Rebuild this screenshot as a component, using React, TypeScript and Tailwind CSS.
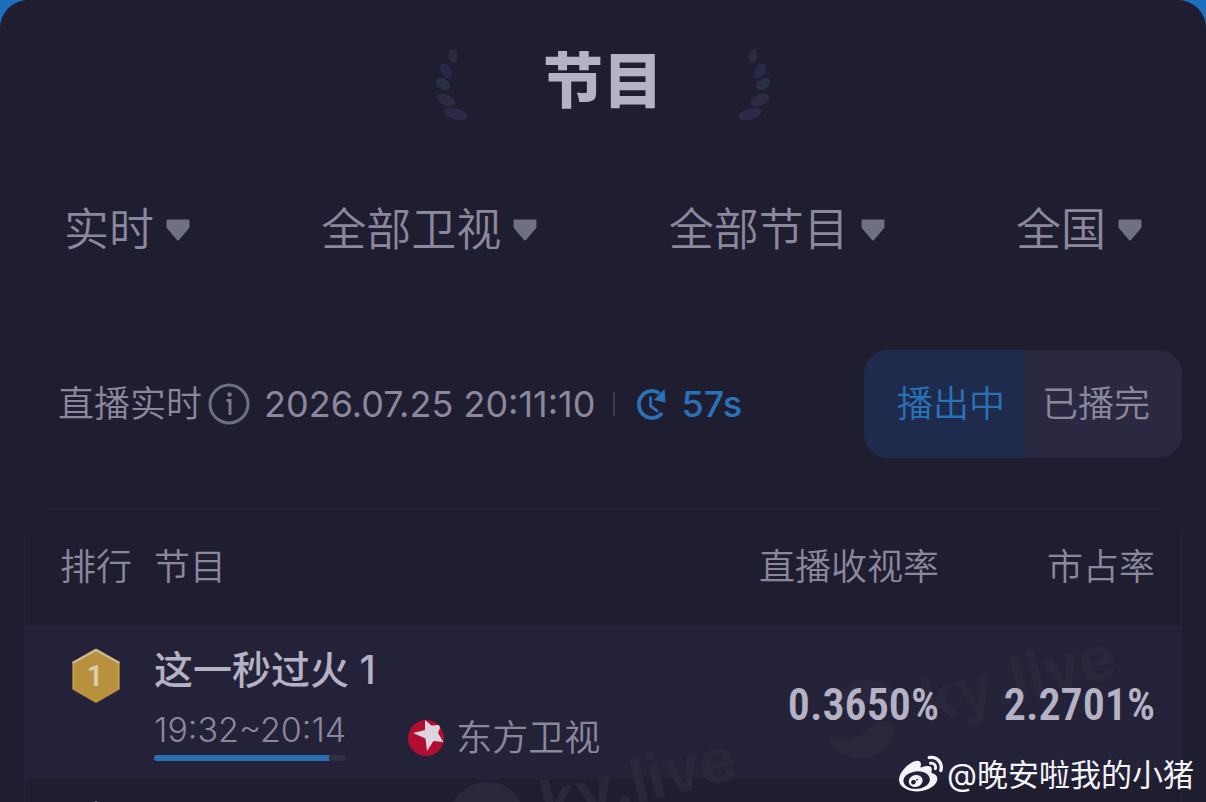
import { useState } from "react";
import { FaWeibo } from "react-icons/fa";

const FILTERS = [
  { id: "time", label: "实时" },
  { id: "channel", label: "全部卫视" },
  { id: "program", label: "全部节目" },
  { id: "region", label: "全国" },
];

const ROWS = [
  {
    rank: 1,
    title: "这一秒过火 1",
    time: "19:32~20:14",
    progress: 91,
    channel: "东方卫视",
    rating: "0.3650%",
    share: "2.2701%",
  },
];

function Laurel({ flip = false }: { flip?: boolean }) {
  return (
    <svg width="36" height="72" viewBox="0 0 36 72" className={flip ? "-scale-x-100" : ""} aria-hidden="true">
      <ellipse cx="18" cy="8" rx="4.500" ry="7" fill="#2b2a42" transform="rotate(-8 18 8)" />
      <ellipse cx="11" cy="23" rx="5" ry="8" fill="#2a2849" transform="rotate(-32 11 23)" />
      <ellipse cx="8" cy="36" rx="5" ry="8" fill="#293046" transform="rotate(-56 8 36)" />
      <ellipse cx="11" cy="52" rx="5.500" ry="10" fill="#2d2b42" transform="rotate(-66 11 52)" />
      <ellipse cx="21" cy="66" rx="5.500" ry="12" fill="#2c2a48" transform="rotate(-76 21 66)" />
    </svg>
  );
}

function FilterArrow() {
  return (
    <svg width="24" height="22" viewBox="0 0 24 22" aria-hidden="true">
      <path d="M1.500 0.500h21a1 1 0 0 1 1 1v6a3 3 0 0 1-.7 1.900L13 21a1.400 1.400 0 0 1-2 0L1.200 9.400A3 3 0 0 1 .5 7.500v-6a1 1 0 0 1 1-1z" fill="#6f7080" />
    </svg>
  );
}

function InfoIcon() {
  return (
    <svg width="42" height="42" viewBox="0 0 42 42" fill="none" aria-hidden="true">
      <circle cx="21" cy="21" r="19" stroke="#6c7284" strokeWidth="3" />
      <circle cx="21.500" cy="11.500" r="2.300" fill="#77788a" />
      <path d="M18.500 17.500H22V32" stroke="#77788a" strokeWidth="3" />
    </svg>
  );
}

function RefreshClock() {
  return (
    <svg width="32" height="34" viewBox="0 0 32 34" fill="none" aria-hidden="true">
      <path d="M24.500 6.500A13 13.500 0 1 0 27 26" stroke="#2a72b8" strokeWidth="3.800" />
      <path d="M29.500 2l1 13.500L19 13z" fill="#2a72b8" />
      <path d="M15.500 9.500V19l7.500 5.500" stroke="#2a72b8" strokeWidth="2.800" />
    </svg>
  );
}

function RankBadge({ rank }: { rank: number }) {
  return (
    <svg width="50" height="56" viewBox="0 0 50 56" role="img" aria-label={`${rank}`}>
      <path d="M25 1 48.500 14.500v27L25 55 1.500 41.500v-27z" fill="#b8913f" />
      <path d="M1.500 15 25 2l23.500 13" fill="none" stroke="#cdb985" strokeWidth="2.500" />
      <path d="M2.500 15v26M47.500 15v26" stroke="#c9a653" strokeWidth="1.500" />
      <text x="24" y="38" textAnchor="middle" fontSize="29" fontWeight="600" fontFamily="Roboto, sans-serif" fill="#dccdae">
        {rank}
      </text>
    </svg>
  );
}

function DragonLogo() {
  return (
    <svg width="36" height="36" viewBox="0 0 36 36" aria-hidden="true">
      <circle cx="18" cy="18" r="18" fill="#b00f31" />
      <path d="M17 0l6.500 5.500L31 5l1 3-2 5 5.500 9-10-1-6.500 10-1.500-12.500L5 13l12-3z" fill="#dcd5e0" />
    </svg>
  );
}

function BrandStamp() {
  return (
    <div className="flex -rotate-14 items-center gap-3 text-[62px] leading-none font-bold text-[#29273c]">
      <svg width="92" height="84" viewBox="0 0 92 84" fill="currentColor" aria-hidden="true">
        <path d="M8 38C14 10 48-4 72 14c14 11 16 30 6 44-2-17-10-27-24-29C36 26 24 32 8 38z" />
        <path d="M4 48c10 14 26 16 40 8 12-7 22-7 30 4-8 18-28 26-46 20C14 75 5 63 4 48z" />
      </svg>
      <span>ky.live</span>
    </div>
  );
}

export default function App() {
  const [status, setStatus] = useState<"airing" | "finished">("airing");

  return (
    <div className="h-screen bg-[#1c6fbd] font-['Inter','Noto_Sans_CJK_SC',sans-serif] text-[#8b889d]">
      <main className="relative flex h-full flex-col overflow-hidden rounded-t-[28px] bg-[#1f1d30]">
        {/* Title */}
        <header className="flex items-start justify-center gap-[72px] pt-12">
          <Laurel />
          <h1 className="text-[60px] leading-[66px] font-black text-[#b5b2c4]">节目</h1>
          <Laurel flip />
        </header>

        {/* Filters */}
        <div className="mt-20 flex items-center justify-between px-16 pb-8">
          {FILTERS.map((f) => (
            <label key={f.id} className="flex items-center gap-3">
              <select
                aria-label={f.label}
                className="field-sizing-content appearance-none bg-transparent text-[45px] leading-[60px] font-[350] outline-none"
              >
                <option>{f.label}</option>
              </select>
              <FilterArrow />
            </label>
          ))}
        </div>

        {/* Live status */}
        <div className="flex items-center justify-between border-t border-[#232136] pt-[57px] pr-6 pl-[58px] text-[36px] leading-[48px]">
          <div className="flex items-center">
            <span className="font-[350]">直播实时</span>
            <button aria-label="说明" className="ml-1.5">
              <InfoIcon />
            </button>
            <time className="ml-3.5">2026.07.25 20:11:10</time>
            <span className="mr-5 ml-[18px] h-6 w-0.5 bg-[#3c3a4e]" />
            <RefreshClock />
            <span className="ml-3.5 font-medium text-[#2a72b8]">57s</span>
          </div>
          <div className="flex overflow-hidden rounded-3xl bg-[#2b2942] font-[350]">
            <button
              onClick={() => setStatus("airing")}
              className={`h-[108px] w-40 pl-3.5 ${status === "airing" ? "bg-[#1e2b4d] text-[#2a72b8]" : ""}`}
            >
              播出中
            </button>
            <button
              onClick={() => setStatus("finished")}
              className={`h-[108px] w-[158px] pr-3.5 ${status === "finished" ? "bg-[#1e2b4d] text-[#2a72b8]" : ""}`}
            >
              已播完
            </button>
          </div>
        </div>

        {/* Ranking */}
        <section className="relative mx-6 mt-[50px] flex-1 overflow-hidden rounded-t-3xl border border-b-0 border-[#242237]">
          <table className="w-full border-collapse">
            <thead>
              <tr className="h-[116px] text-[36px]">
                <th className="w-[129px] pl-[35px] text-left font-[350] whitespace-nowrap">排行</th>
                <th className="text-left font-[350]">节目</th>
                <th className="text-right font-[350]">直播收视率</th>
                <th className="w-[242px] pr-[26px] text-right font-[350]">市占率</th>
              </tr>
            </thead>
            <tbody>
              {ROWS.map((row) => (
                <tr key={row.rank} className="h-[154px] bg-[#242238]">
                  <td className="pt-[23px] pl-[46px] align-top">
                    <RankBadge rank={row.rank} />
                  </td>
                  <td className="relative z-10 pt-[18px] align-top">
                    <div className="text-[39px] leading-[54px] font-medium text-[#b5b2c4]">{row.title}</div>
                    <div className="mt-2 flex items-start gap-[62px] leading-[50px] font-[350]">
                      <div>
                        <div className="text-[34px]">{row.time}</div>
                        <div className="h-1.5 overflow-hidden rounded-full bg-[#32303f]">
                          <div className="h-full bg-[#2a6fb2]" style={{ width: `${row.progress}%` }} />
                        </div>
                      </div>
                      <div className="flex items-center gap-3 pt-2 text-[36px]">
                        <DragonLogo />
                        <span>{row.channel}</span>
                      </div>
                    </div>
                  </td>
                  <td className="relative z-10 pt-1.5 text-right font-['Roboto_Condensed','Roboto',sans-serif] text-[44px] font-semibold text-[#b5b2c4]">
                    {row.rating}
                  </td>
                  <td className="relative z-10 pt-1.5 pr-[26px] text-right font-['Roboto_Condensed','Roboto',sans-serif] text-[44px] font-semibold text-[#b5b2c4]">
                    {row.share}
                  </td>
                </tr>
              ))}
              <tr aria-hidden="true">
                <td className="pt-[22px] pl-[46px] align-top">
                  <svg width="50" height="56" viewBox="0 0 50 56">
                    <path d="M25 0 48.500 14v28L25 56 1.500 42V14z" fill="#8f93a3" />
                  </svg>
                </td>
              </tr>
            </tbody>
          </table>
          <div className="absolute top-[140px] right-[62px]">
            <BrandStamp />
          </div>
          <div className="absolute top-[242px] right-[442px]">
            <BrandStamp />
          </div>
        </section>

        {/* Author mark */}
        <div className="absolute right-3 bottom-1 z-20 flex items-center gap-1 text-[31px] leading-[46px] text-[#f4f3f8]">
          <FaWeibo size={44} aria-hidden="true" />
          <span>@晚安啦我的小猪</span>
        </div>
      </main>
    </div>
  );
}
